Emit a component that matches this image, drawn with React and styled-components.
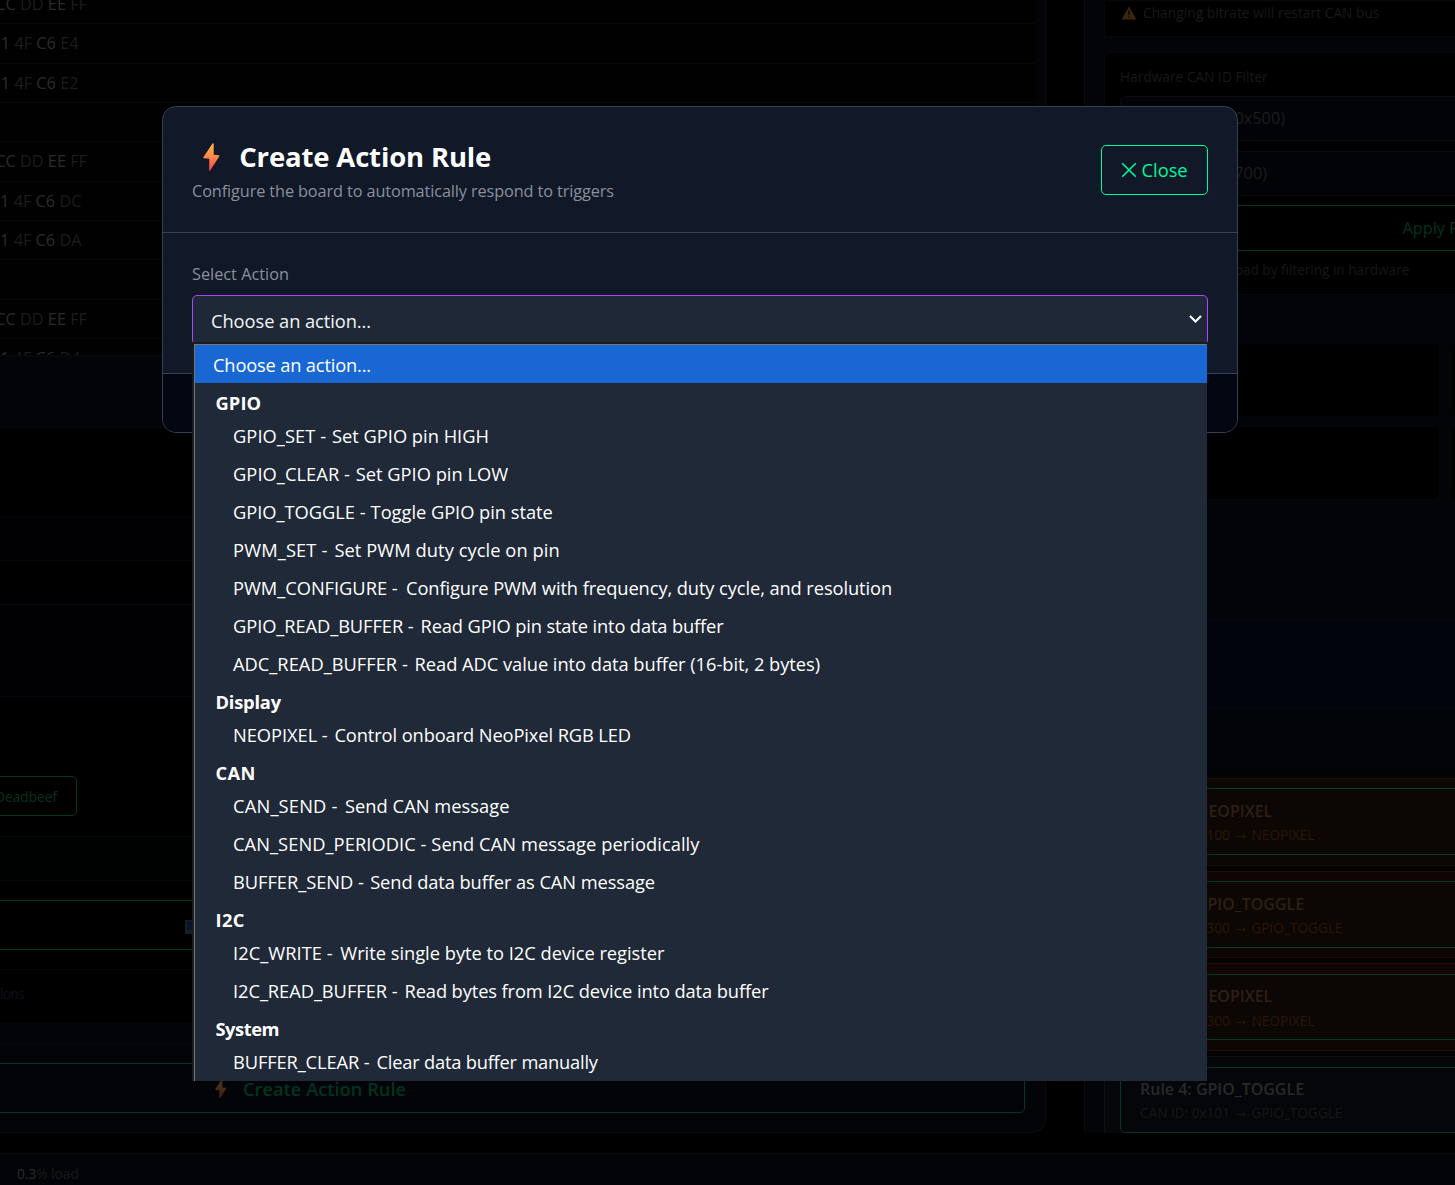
import React from "react";
import styled, { createGlobalStyle, css } from "styled-components";

const GlobalStyle = createGlobalStyle`
  *, *::before, *::after { box-sizing: border-box; }
  body {
    margin: 0;
    background: #000;
    overflow: hidden;
    font-family: "Open Sans", "Noto Sans", sans-serif;
  }
`;

const Text = styled.span`
  display: block;
  white-space: pre;
  font-size: ${(p) => p.$size || 16.3}px;
  font-weight: ${(p) => p.$weight || 400};
  letter-spacing: ${(p) => p.$track || 0}px;
  color: ${(p) => p.$color || "inherit"};
  line-height: 1.3;
`;

/* ---------- page behind the dialog ---------- */

const Page = styled.div`
  position: relative;
  display: flex;
  flex-direction: column;
  width: 1455px;
  height: 1185px;
  overflow: hidden;
  background: #000;
`;

const Columns = styled.div`
  display: grid;
  grid-template-columns: 1046px 371px;
  gap: 38px;
  height: 1133px;
`;

const Panel = styled.section`
  display: flex;
  flex-direction: column;
  height: 1133px;
  overflow: hidden;
  background: #030407;
  border: 0 solid #0b0c0f;
`;

const LeftPanel = styled(Panel)`
  border-right-width: 1px;
  border-bottom-width: 1px;
  border-bottom-right-radius: 14px;
`;

const RightPanel = styled(Panel)`
  border-left-width: 1px;
  padding-left: 19px;
`;

const LogList = styled.div`
  flex: none;
  height: 357px;
  margin-right: 9px;
  overflow: hidden;
  background: #010102;
  border-bottom: 2px solid #07080a;
`;

const LogRows = styled.div`
  margin-top: -15px;
`;

const LogRow = styled.div`
  display: flex;
  align-items: center;
  justify-content: flex-end;
  width: 1036px;
  height: 39.33px;
  padding-right: ${(p) => 1036 - p.$end}px;
  border-bottom: 1px solid #060709;
`;

const Bytes = styled.span`
  font-size: ${(p) => p.$size || 16.3}px;
  line-height: 22px;
  white-space: pre;
  color: #1c1c1d;
`;

const Byte = styled.span`
  color: #2b2b2c;
`;

const Band = styled.div`
  flex: none;
  display: flex;
  align-items: center;
  height: ${(p) => p.$h}px;
  padding-top: ${(p) => p.$down || 0}px;
  padding-bottom: ${(p) => p.$up || 0}px;
  background: ${(p) => p.$bg || "#000"};
  border-top: ${(p) => (p.$line ? `1px solid ${p.$line}` : "0")};
`;

const outline = css`
  border: 1px solid #003823;
  color: #003320;
`;

const PresetButton = styled.div`
  ${outline}
  flex: none;
  display: flex;
  align-items: center;
  justify-content: flex-end;
  width: 92px;
  height: 40px;
  margin-left: -15px;
  padding: 2px 19px 0 0;
  border-radius: 5px;
`;

const SendButton = styled.div`
  ${outline}
  flex: none;
  display: flex;
  align-items: center;
  height: 50px;
  width: 1030px;
  margin-left: -5px;
  padding-left: 189px;
  background: #000;
`;

const CreateButton = styled(SendButton)`
  padding-left: 219px;
  gap: 16.5px;
  padding-top: 2px;
  background: #030407;
  border-radius: 5px;
`;

const Footer = styled.footer`
  display: flex;
  align-items: center;
  height: 32px;
  margin-top: 20px;
  padding: 8px 0 0 17px;
  background: #030407;
  border-top: 1px solid #0b0c0f;
`;

const Card = styled.div`
  flex: none;
  display: flex;
  flex-direction: column;
  height: ${(p) => p.$h}px;
  width: 370px;
  padding: 0 15px;
  background: #000;
  border: 1px solid #07080b;
  border-radius: 5px;
`;

const WarnRow = styled.div`
  display: flex;
  align-items: center;
  gap: 6px;
  padding: 3px 0 0 1px;
`;

const Field = styled.div`
  flex: none;
  display: flex;
  align-items: center;
  justify-content: flex-end;
  width: 380px;
  height: 45px;
  margin-bottom: ${(p) => p.$after}px;
  padding-right: ${(p) => p.$right}px;
  background: #020306;
  border: 1px solid #0a0b0e;
  border-radius: 5px;
`;

const ApplyButton = styled.div`
  ${outline}
  flex: none;
  display: flex;
  align-items: center;
  width: 380px;
  height: 46px;
  padding: 2px 0 0 281.5px;
  border-radius: 5px;
`;

const StatGrid = styled.div`
  flex: none;
  display: grid;
  grid-template-columns: 320px 320px;
  grid-auto-rows: 74px;
  gap: 9px 10px;
  margin: 48px 0 0 16px;
  height: 277px;
`;

const Stat = styled.div`
  background: #000;
  border: 1px solid #050609;
  border-radius: 5px;
`;

const InfoBand = styled.div`
  flex: none;
  height: 89px;
  margin-bottom: 69px;
  background: #01040c;
  border: 1px solid #030816;
  border-width: 1px 0;
`;

const RuleList = styled.div`
  display: flex;
  flex-direction: column;
  gap: 5px;
`;

const RuleCard = styled.div`
  flex: none;
  height: 87.7px;
  width: 400px;
  padding: 9.45px 15px 0;
  color: ${(p) => (p.$hot ? "#2d2015" : "#29292b")};
  background: ${(p) => p.$bg};
  border: 1px solid ${(p) => (p.$hot ? "#1f0f06" : "#0e1013")};
  box-shadow: ${(p) => (p.$hot ? "0 0 5px 1px #0a0502" : "none")};
`;

const RuleButton = styled.div`
  display: flex;
  flex-direction: column;
  gap: 4.4px;
  height: 66.4px;
  padding: 11.5px 19px 0;
  background: ${(p) => (p.$hot ? "#0c0604" : "#050609")};
  border: 1px solid #003823;
  border-radius: 5px;
`;

const Arrow = styled.span`
  margin: 0 2.3px;
  font-family: "DejaVu Sans", sans-serif;
  font-size: 12px;
  line-height: 1;
`;

/* ---------- dialog ---------- */

const Overlay = styled.div`
  position: absolute;
  inset: 0;
  display: flex;
  align-items: flex-start;
  padding: 106px 0 0 162px;
`;

const Dialog = styled.div`
  width: 1076px;
  height: 327px;
  display: flex;
  flex-direction: column;
  background: #111827;
  border: 1px solid #364153;
  border-radius: 14px;
  overflow: hidden;
`;

const DialogHeader = styled.header`
  flex: none;
  display: flex;
  justify-content: space-between;
  align-items: flex-start;
  height: 126px;
  padding: 0 29px;
  border-bottom: 1px solid #364153;
`;

const Heading = styled.div`
  display: flex;
  flex-direction: column;
  gap: 6px;
  padding-top: 32px;
`;

const TitleRow = styled.div`
  display: flex;
  align-items: center;
  gap: 19.5px;
  height: 36px;
  padding-left: 11px;
`;

const CloseButton = styled.button`
  display: flex;
  align-items: center;
  gap: 5px;
  width: 107px;
  height: 50px;
  margin-top: 38px;
  padding: 0 0 0 18.5px;
  font-family: inherit;
  color: #00f99a;
  background: transparent;
  border: 1px solid #00f99a;
  border-radius: 5px;
`;

const DialogBody = styled.div`
  flex: none;
  height: 140px;
  padding: 31px 29px 0;
`;

const SelectBox = styled.div`
  display: flex;
  align-items: center;
  justify-content: space-between;
  height: 50px;
  margin-top: 9.6px;
  padding: 2px 5px 0 18px;
  color: #f4f5f6;
  background: #1e2837;
  border: 1px solid #ad46ff;
  border-radius: 5px;
`;

const DialogFooter = styled.footer`
  flex: 1;
  background: #030712;
  border-top: 1px solid #364153;
`;

const Menu = styled.div`
  position: absolute;
  left: 192px;
  top: 342px;
  width: 1015px;
  height: 739px;
  overflow: hidden;
  padding: 2px 0 0 2px;
  background: #1b1b1b;
`;

const MenuInner = styled.div`
  height: 737px;
  background: #1f2937;
  border: 1px solid #767676;
  border-width: 1px 0 0 1px;
`;

const Option = styled.div`
  display: flex;
  align-items: center;
  height: 38px;
  padding: 2px 0 0 ${(p) => (p.$nested ? 38 : 18)}px;
  color: #fff;
  background: ${(p) => (p.$active ? "#1967d2" : "transparent")};
`;

const GroupLabel = styled(Option)`
  height: 33px;
  padding: 7px 0 0 20.5px;
`;

const Description = styled.span`
  margin-left: ${(p) => p.$gap}px;
  letter-spacing: ${(p) => p.$track}px;
`;

const Bolt = ({ w, h, dim }) => (
  <svg width={w} height={h} viewBox="0 0 50 84" opacity={dim ? 0.28 : 1}>
    <defs>
      <linearGradient id="bolt" x1="0" y1="0" x2="0" y2="1">
        <stop offset="0" stopColor="#ffb946" />
        <stop offset="0.5" stopColor="#ff8a45" />
        <stop offset="1" stopColor="#f03f50" />
      </linearGradient>
    </defs>
    <path
      d="M29 1 Q32 0 32 3 L32 35 L48 37 Q50 38 49 40 L22 82 Q19 85 18 81 L19 47 L2 46 Q0 45 1 43 Z"
      fill="url(#bolt)"
    />
  </svg>
);

const Warning = () => (
  <svg width="16" height="14" viewBox="0 0 16 14">
    <path d="M8 0.6 L15.6 13.4 H0.4 Z" fill="#3a250d" />
    <path d="M8 4.6 V9 M8 10.4 V11.8" stroke="#0c0704" strokeWidth="1.4" />
  </svg>
);

const Outbox = () => (
  <svg width="20" height="18" viewBox="0 0 20 18">
    <rect x="0" y="4" width="18" height="14" rx="1" fill="#1c1c22" />
    <rect x="2" y="5" width="14" height="9" fill="#04182b" />
    <path d="M5 5 L10 0 L15 5 Z" fill="#3a0a0e" />
  </svg>
);

const Cross = () => (
  <svg width="16" height="16" viewBox="0 0 16 16">
    <path d="M1.2 1.2 L14.8 14.8 M14.8 1.2 L1.2 14.8" stroke="currentColor" strokeWidth="1.6" fill="none" />
  </svg>
);

const Chevron = () => (
  <svg width="13" height="11" viewBox="0 0 13 11">
    <path d="M1 1 L6.5 6.5 L12 1" stroke="#fff" strokeWidth="2.1" fill="none" />
  </svg>
);

const log = [
  { end: 87, bytes: ["CC", "DD", "EE", "FF"] },
  { end: 78.5, bytes: ["01", "4F", "C6", "E4"] },
  { end: 78.5, bytes: ["01", "4F", "C6", "E2"] },
  null,
  { end: 87, bytes: ["CC", "DD", "EE", "FF"] },
  { end: 81.5, bytes: ["01", "4F", "C6", "DC"] },
  { end: 81.5, bytes: ["01", "4F", "C6", "DA"] },
  null,
  { end: 87, bytes: ["CC", "DD", "EE", "FF"] },
  { end: 80.5, bytes: ["01", "4F", "C6", "D4"] },
];

const rules = [
  { n: 1, id: "0x100", action: "NEOPIXEL", bg: "#0d0704" },
  { n: 2, id: "0x300", action: "GPIO_TOGGLE", bg: "linear-gradient(#110504 0 10px, #0c0604 10px)" },
  { n: 3, id: "0x300", action: "NEOPIXEL", bg: "linear-gradient(#130404 0 10px, #0c0604 10px)" },
  { n: 4, id: "0x101", action: "GPIO_TOGGLE", bg: "#060709", idle: true },
];

/* each item: command, description, letter spacing, extra gap before the description */
const groups = [
  {
    label: "GPIO", track: 0.1,
    items: [
      ["GPIO_SET", "Set GPIO pin HIGH", 0.061, 1],
      ["GPIO_CLEAR", "Set GPIO pin LOW", 0.056, 1],
      ["GPIO_TOGGLE", "Toggle GPIO pin state", -0.02, 0.3],
      ["PWM_SET", "Set PWM duty cycle on pin", 0.144, 2],
      ["PWM_CONFIGURE", "Configure PWM with frequency, duty cycle, and resolution", -0.03, 3.7],
      ["GPIO_READ_BUFFER", "Read GPIO pin state into data buffer", -0.076, 2.3],
      ["ADC_READ_BUFFER", "Read ADC value into data buffer (16-bit, 2 bytes)", 0.004, 2],
    ],
  },
  { label: "Display", track: -0.2, items: [["NEOPIXEL", "Control onboard NeoPixel RGB LED", -0.043, 2]] },
  {
    label: "CAN", track: 0.4,
    items: [
      ["CAN_SEND", "Send CAN message", 0.188, 2.5],
      ["CAN_SEND_PERIODIC", "Send CAN message periodically", 0.062, 0],
      ["BUFFER_SEND", "Send data buffer as CAN message", -0.036, 1.6],
    ],
  },
  {
    label: "I2C", track: 0.4,
    items: [
      ["I2C_WRITE", "Write single byte to I2C device register", 0.054, 2.7],
      ["I2C_READ_BUFFER", "Read bytes from I2C device into data buffer", -0.054, 2.3],
    ],
  },
  { label: "System", track: -0.45, items: [["BUFFER_CLEAR", "Clear data buffer manually", -0.12, 2.4]] },
];

const MonitorPanel = () => (
  <LeftPanel>
    <LogList>
      <LogRows>
        {log.map((row, i) => (
          <LogRow key={i} $end={row ? row.end : 0}>
            {row && (
              <Bytes>
                <Byte>{row.bytes[0]}</Byte> {row.bytes[1]} <Byte>{row.bytes[2]}</Byte> {row.bytes[3]}
              </Bytes>
            )}
          </LogRow>
        ))}
      </LogRows>
    </LogList>
    <Band $h={72} $bg="#030407" />
    <Band $h={87} />
    <Band $h={44} $bg="#010103" $line="#05040b" />
    <Band $h={44} $line="#05040b" />
    <Band $h={92} $bg="#010103" $line="#08030d" />
    <Band $h={80} $line="#08030d" />
    <Band $h={40}>
      <PresetButton>
        <Text $size={13.7} $weight={500}>Deadbeef</Text>
      </PresetButton>
    </Band>
    <Band $h={20} />
    <Band $h={44} $bg="#000201" $line="#000a06" />
    <Band $h={20} $line="#000a06" />
    <Band $h={50}>
      <SendButton>
        <Outbox />
      </SendButton>
    </Band>
    <Band $h={19} />
    <Band $h={54} $up={5} $line="#060607">
      <Text $size={13.7} $track={-0.7} $color="#120f18">lons</Text>
    </Band>
    <Band $h={20} $bg="#030407" />
    <Band $h={20} $bg="#030407" $line="#07080a" />
    <Band $h={50} $bg="#030407">
      <CreateButton>
        <Bolt w={11.5} h={20} dim />
        <Text $size={18.3} $weight={600}>Create Action Rule</Text>
      </CreateButton>
    </Band>
  </LeftPanel>
);

const SettingsPanel = () => (
  <RightPanel>
    <Card $h={37}>
      <WarnRow>
        <Warning />
        <Text $size={13.7} $track={0.052} $color="#18191b">Changing bitrate will restart CAN bus</Text>
      </WarnRow>
    </Card>
    <Band $h={15} $bg="#030407" />
    <Card $h={243}>
      <Band $h={43} $down={4}>
        <Text $size={13.7} $track={0.02} $color="#18191b">Hardware CAN ID Filter</Text>
      </Band>
      <Field $right={214} $after={10}>
        <Text $color="#1c1d1f">Start ID (0x500)</Text>
      </Field>
      <Field $right={232} $after={9}>
        <Text $color="#1c1d1f">End ID (0x700)</Text>
      </Field>
      <ApplyButton>
        <Text $size={16.3} $weight={500}>Apply Filter</Text>
      </ApplyButton>
      <Band $h={39} $up={1}>
        <Text $size={13.7} $track={-0.05} $color="#161719">Reduces the CPU load by filtering in hardware</Text>
      </Band>
    </Card>
    <StatGrid>
      <Stat />
      <Stat />
      <Stat />
      <Stat />
    </StatGrid>
    <InfoBand />
    <RuleList>
      {rules.map((r) => (
        <RuleCard key={r.n} $hot={!r.idle} $bg={r.bg}>
          <RuleButton $hot={!r.idle}>
            <Text $size={16} $weight={600}>{`Rule ${r.n}: ${r.action}`}</Text>
            <Text $size={13.7} $track={-0.05} $color={r.idle ? "#151618" : "#2c1600"}>
              {`CAN ID: ${r.id} `}<Arrow>→</Arrow>{` ${r.action}`}
            </Text>
          </RuleButton>
        </RuleCard>
      ))}
    </RuleList>
  </RightPanel>
);

const ActionDialog = () => (
  <Dialog>
    <DialogHeader>
      <Heading>
        <TitleRow>
          <Bolt w={16.7} h={28} />
          <Text $size={27.5} $weight={700} $track={-0.153} $color="#fff">Create Action Rule</Text>
        </TitleRow>
        <Text $track={-0.115} $color="#8a919d">Configure the board to automatically respond to triggers</Text>
      </Heading>
      <CloseButton>
        <Cross />
        <Text $size={18.3}>Close</Text>
      </CloseButton>
    </DialogHeader>
    <DialogBody>
      <Text $color="#8a919d">Select Action</Text>
      <SelectBox>
        <Text $size={18.3} $track={-0.06}>Choose an action...</Text>
        <Chevron />
      </SelectBox>
    </DialogBody>
    <DialogFooter />
  </Dialog>
);

const ActionMenu = () => (
  <Menu>
    <MenuInner>
      <Option $active>
        <Text $size={18.3} $track={-0.17}>Choose an action...</Text>
      </Option>
      {groups.map((g) => (
        <React.Fragment key={g.label}>
          <GroupLabel>
            <Text $size={18.3} $weight={700} $track={g.track}>{g.label}</Text>
          </GroupLabel>
          {g.items.map(([command, description, track, gap]) => (
            <Option key={command} $nested>
              <Text $size={18.3} $track={track}>
                {`${command} - `}
                <Description $gap={gap} $track={track - gap / description.length}>{description}</Description>
              </Text>
            </Option>
          ))}
        </React.Fragment>
      ))}
    </MenuInner>
  </Menu>
);

export default function App() {
  return (
    <>
      <GlobalStyle />
      <Page>
        <Columns>
          <MonitorPanel />
          <SettingsPanel />
        </Columns>
        <Footer>
          <Bytes $size={13.7}><Byte>0.3</Byte></Bytes>
          <Text $size={13.7} $color="#18191c">% load</Text>
        </Footer>
        <Overlay>
          <ActionDialog />
        </Overlay>
        <ActionMenu />
      </Page>
    </>
  );
}
